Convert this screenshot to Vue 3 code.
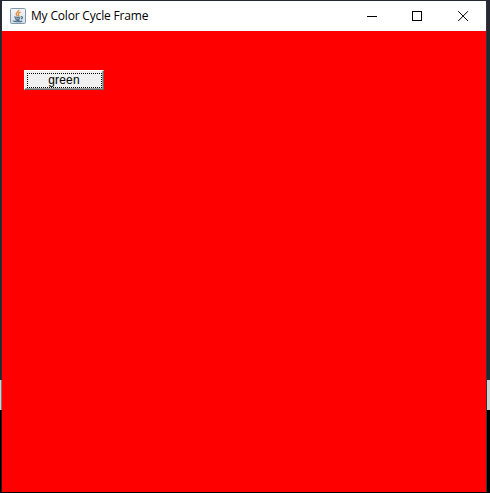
<script setup>
import { ref, computed } from 'vue'

const colors = ['red', 'green', 'blue']
const index = ref(0)
const next = computed(() => colors[(index.value + 1) % colors.length])
const cycle = () => {
  index.value = (index.value + 1) % colors.length
}
</script>

<template>
  <div class="desktop">
    <section class="window">
      <header class="titlebar">
        <svg class="java" width="16" height="16" viewBox="0 0 16 16">
          <defs>
            <linearGradient id="tile" x1="0" y1="0" x2="0" y2="1">
              <stop offset="0" stop-color="#f4f7f9" />
              <stop offset="1" stop-color="#d3dde5" />
            </linearGradient>
          </defs>
          <rect x=".5" y=".5" width="15" height="15" rx="1" fill="url(#tile)" stroke="#8299aa" />
          <path d="M8.7 1.8C9.4 3.5 5.6 4.3 6.2 6.1C6.4 6.9 7.2 7.4 7.3 8.1M10.6 4.2C8.6 4.8 7.8 5.6 8.6 6.6C9 7.2 8.6 7.8 8.2 8.2" fill="none" stroke="#e58a35" stroke-width="1.3" />
          <path d="M4.6 8.7C3.9 9.4 9 9.6 10.5 8.9M5 10.5C6.4 11.2 8.8 11.1 10 10.5M5.5 12C7 12.6 8.6 12.5 9.6 12M11 8.7C13.2 8.4 12.6 10.6 11 11M3.5 12.6C2.2 13.8 9.8 14.3 12.2 13" fill="none" stroke="#456a85" stroke-width="1.1" />
        </svg>
        <span class="title">My Color Cycle Frame</span>
        <div class="controls">
          <span class="control"><svg width="11" height="11" viewBox="0 0 11 11"><path d="M0 5.5H10" /></svg></span>
          <span class="control"><svg width="11" height="11" viewBox="0 0 11 11"><path d="M.5 .5H9.5V9.5H.5Z" /></svg></span>
          <span class="control"><svg class="smooth" width="11" height="11" viewBox="0 0 11 11"><path d="M.2 .2L10 10M10 .2L.2 10" /></svg></span>
        </div>
      </header>
      <main class="canvas" :class="colors[index]">
        <button class="cycle" @click="cycle">
          <span class="focus">
            <svg class="ring" width="75" height="15" viewBox="0 0 75 15"><path d="M0 .5H75M0 14.5H75M.5 2V14M74.5 2V14" /></svg>
            <span class="label">{{ next }}</span>
          </span>
        </button>
      </main>
    </section>
  </div>
</template>

<style>
body { margin: 0; overflow: hidden; }
</style>

<style scoped>
.desktop {
  box-sizing: border-box;
  width: 490px;
  height: 493px;
  padding: 1px 4px 1px 2px;
  background: linear-gradient(#252a32 0 380px, #d0d0d0 380px 410px, #050000 410px);
}
.window {
  width: 484px;
  height: 491px;
  display: flex;
  flex-direction: column;
  box-shadow: 1px 0 #30383c, -1px 0 #30303488;
}
.titlebar {
  height: 30px;
  flex: none;
  display: flex;
  align-items: center;
  background: #fff;
}
.java { margin: 0 5px 0 8px; flex: none; }
.title {
  font: 12px/16px "Open Sans", "Noto Sans", sans-serif;
  letter-spacing: -0.18px;
  color: #000;
  white-space: nowrap;
}
.controls { display: flex; margin-left: auto; }
.control {
  width: 45.5px;
  height: 30px;
  display: flex;
  align-items: center;
  justify-content: center;
}
.control path { fill: none; stroke: #000; stroke-width: 1; }
.control svg { shape-rendering: crispEdges; }
.control .smooth { shape-rendering: auto; }
.canvas { flex: 1; padding: 39px 22px; }
.canvas.red { background: #f00; }
.canvas.green { background: #0f0; }
.canvas.blue { background: #00f; }
.cycle {
  box-sizing: border-box;
  display: block;
  width: 80px;
  height: 20px;
  margin: 0;
  padding: 2px;
  border: 1px solid;
  border-color: #fff #696969 #696969 #fff;
  box-shadow: inset -1px -1px #a0a0a0;
  background: #f0f0f0;
  outline: none;
}
.focus { display: grid; width: 75px; height: 15px; }
.ring, .label { grid-area: 1 / 1; }
.ring path { fill: none; stroke: #000; stroke-dasharray: 1 1; shape-rendering: crispEdges; }
.label {
  font: 12px/14px "Liberation Sans", Arial, sans-serif;
  letter-spacing: 0.2px;
  margin-left: -1px;
  color: #000;
  text-align: center;
}
</style>
